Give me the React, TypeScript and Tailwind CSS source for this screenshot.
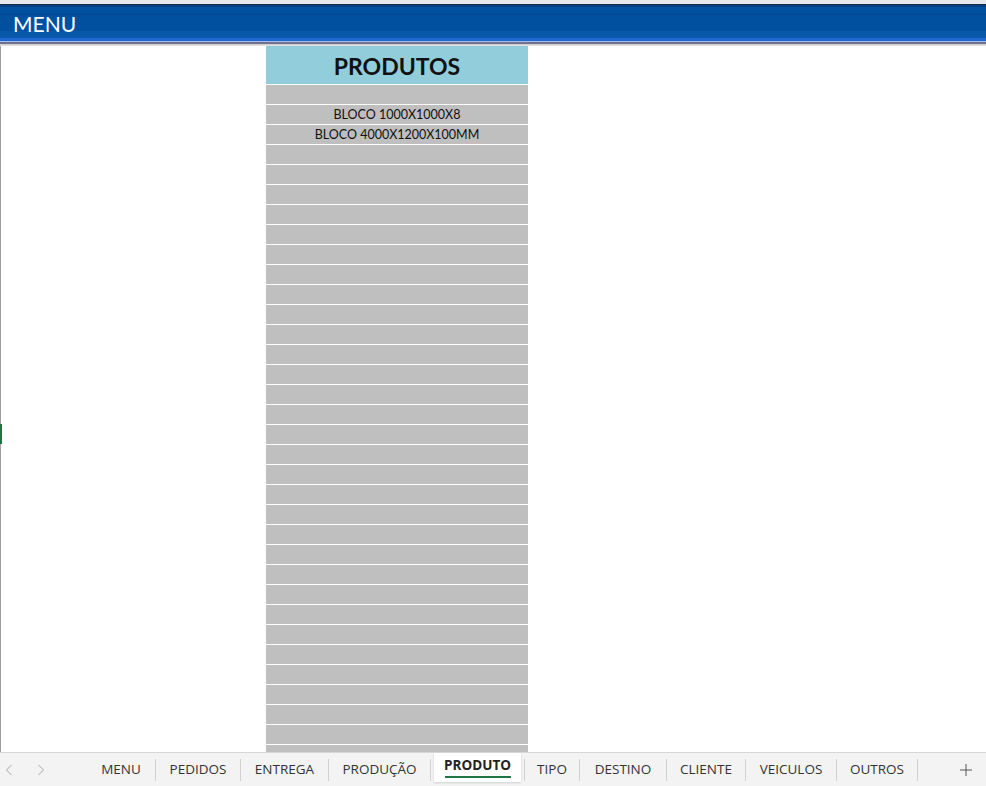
import React from "react";

const tabs: { label: string; w: string; active?: boolean }[] = [
  { label: "MENU", w: "w-[68px]" },
  { label: "PEDIDOS", w: "w-[84px]" },
  { label: "ENTREGA", w: "w-[87px]" },
  { label: "PRODUÇÃO", w: "w-[101px]" },
  { label: "PRODUTO", w: "w-[93px]", active: true },
  { label: "TIPO", w: "w-[54px]" },
  { label: "DESTINO", w: "w-[86px]" },
  { label: "CLIENTE", w: "w-[78px]" },
  { label: "VEICULOS", w: "w-[90px]" },
  { label: "OUTROS", w: "w-[80px]" },
];

const produtos = ["", "BLOCO 1000X1000X8", "BLOCO 4000X1200X100MM"];
const rows = Array.from({ length: 36 }, (_, i) => produtos[i] ?? "");

function Chevron({ dir }: { dir: "left" | "right" }) {
  return (
    <svg width="8" height="12" viewBox="0 0 8 12" fill="none">
      <path
        d={dir === "left" ? "M6.5 1 L1.5 6 L6.5 11" : "M1.5 1 L6.5 6 L1.5 11"}
        stroke="#a6a6a6"
        strokeWidth="1"
      />
    </svg>
  );
}

function Sep() {
  return <div className="h-[22px] w-px shrink-0 bg-[#d0d0d0]" />;
}

export default function App() {
  return (
    <div className="flex h-[786px] w-[986px] flex-col overflow-hidden bg-white font-['Open_Sans',sans-serif]">
      {/* title bar */}
      <div className="h-[46px] shrink-0 bg-[linear-gradient(#e4e9ec_0px,#e4e9ec_4px,#1b2b44_4px,#1b2b44_5px,#003f88_5px,#003f88_7px,#0050a0_7px,#0050a0_14px,#0a4690_14px,#0a4690_15px,#0050a0_15px,#0050a0_31px,#0858aa_31px,#0858aa_38px,#1f68cf_38px,#1f68cf_41px,#a6bdea_41px,#a6bdea_42px,#707090_42px,#707090_44px,#c8c8cc_44px,#e8e8e8_46px)] pl-[2px]">
        <div className="flex h-[42px] items-center overflow-hidden rounded-l-[4px] pl-[11px] pt-[4px]">
          <span className="font-['Lato',sans-serif] text-[21px] leading-none text-white">MENU</span>
        </div>
      </div>

      {/* sheet body */}
      <div className="relative flex min-h-0 flex-1 overflow-hidden">
        <div className="w-px shrink-0 bg-[#a0a0a0]" />
        <div className="ml-[265px] w-[262px] shrink-0">
          <div className="flex h-[38px] items-center justify-center pt-[2px] bg-[#92cddc] font-['Lato',sans-serif] text-[23px] font-bold text-[#111]">
            PRODUTOS
          </div>
          {rows.map((r, i) => (
            <div
              key={i}
              className="flex h-[20px] items-center justify-center border-t border-white bg-[#bfbfbf] pt-[2px] font-['Lato',sans-serif] text-[12.5px] leading-none text-[#111]"
            >
              {r}
            </div>
          ))}
        </div>
        <div className="absolute left-0 top-[378px] h-[20px] w-[2px] bg-[#217346]" />
      </div>

      {/* sheet tabs */}
      <div className="flex h-[34px] shrink-0 items-stretch border-t border-[#d6d6d6] bg-[#f3f3f3] text-[13.5px] text-[#333]">
        <div className="flex w-[87px] shrink-0 items-center gap-[24px] pl-[5px]">
          <Chevron dir="left" />
          <Chevron dir="right" />
        </div>
        {tabs.map((t, i) => (
          <div key={t.label} className="flex items-center">
            {i > 0 && <Sep />}
            {t.active ? (
              <div className={`${t.w} flex h-full items-start px-[3px]`}>
                <div className="flex h-[29px] w-full flex-col items-center justify-start bg-white pt-[4px] shadow-[0_1px_2px_rgba(0,0,0,0.15)]">
                  <span className="font-bold leading-[17px] text-[#222]">{t.label}</span>
                  <div className="mt-[2px] h-[2px] w-[66px] bg-[#217346]" />
                </div>
              </div>
            ) : (
              <div className={`${t.w} flex h-full items-center justify-center`}>{t.label}</div>
            )}
          </div>
        ))}
        <div className="flex items-center">
          <Sep />
        </div>
        <div className="flex flex-1 items-center justify-end pr-[14px]">
          <svg width="12" height="12" viewBox="0 0 12 12">
            <path d="M6 0 V12 M0 6 H12" stroke="#555" strokeWidth="1" />
          </svg>
        </div>
      </div>
    </div>
  );
}
